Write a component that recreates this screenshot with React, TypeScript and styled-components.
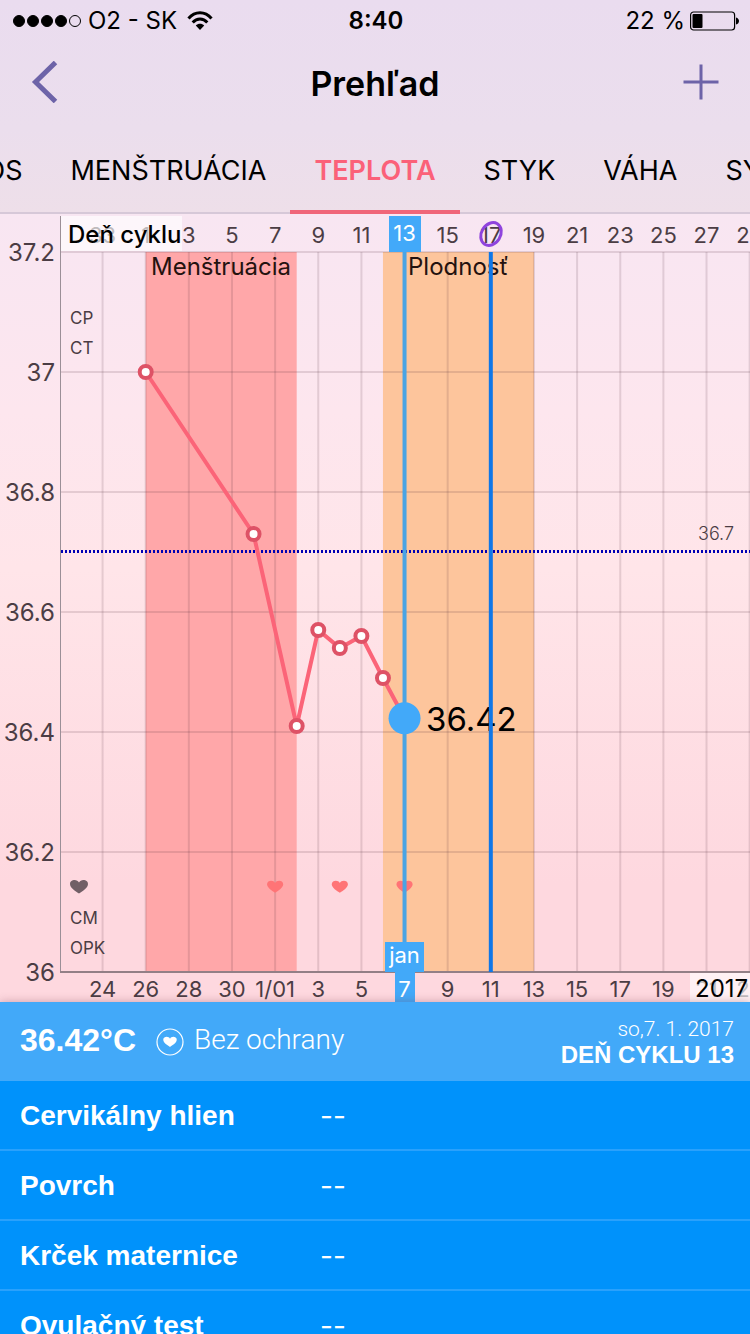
import React from "react";
import styled, { createGlobalStyle } from "styled-components";

const sans = `Inter, Roboto, "Liberation Sans", sans-serif`;
const grotesk = `"Liberation Sans", "Open Sans", sans-serif`;
const light = `Roboto, "Liberation Sans", sans-serif`;
const sky = "#42a9f9";

const GlobalStyle = createGlobalStyle`
  *, *::before, *::after { box-sizing: border-box; }
  body { margin: 0; font-family: ${sans}; color: #000; }
`;

const Screen = styled.div`
  display: flex;
  flex-direction: column;
  height: 100vh;
  overflow: hidden;
  background: #fed8df;
`;

const Top = styled.header`
  flex: none;
  background: linear-gradient(#eadcef, #ebdeed 60%, #eedfe9);
`;

const StatusBar = styled.div`
  display: grid;
  grid-template-columns: 1fr auto 1fr;
  align-items: center;
  height: 40px;
  padding: 2px 11px 0 13px;
  font-size: 24px;
  line-height: 28px;
`;

const StatusSide = styled.div<{ $end?: boolean }>`
  display: flex;
  align-items: center;
  justify-content: ${(p) => (p.$end ? "flex-end" : "flex-start")};
  gap: ${(p) => (p.$end ? 5 : 10)}px;
`;

const Signal = styled.span`
  display: flex;
  gap: 2px;
  margin-right: -3px;
`;

const Dot = styled.i<{ $on: boolean }>`
  width: 12px;
  height: 12px;
  border: 1px solid #000;
  border-radius: 50%;
  background: ${(p) => (p.$on ? "#000" : "transparent")};
`;

const Clock = styled.time`
  font-weight: 600;
`;

const NavBar = styled.div`
  display: grid;
  grid-template-columns: 1fr auto 1fr;
  align-items: center;
  height: 88px;
  padding: 0 31px;
`;

const Title = styled.h1`
  margin: 0;
  font-size: 34px;
  line-height: 40px;
  font-weight: 600;
`;

const IconButton = styled.button<{ $end?: boolean }>`
  justify-self: ${(p) => (p.$end ? "end" : "start")};
  display: flex;
  padding: 0 0 4px;
  border: 0;
  background: none;
`;

const Tabs = styled.nav`
  display: grid;
  grid-template-columns: 1fr auto 1fr;
  height: 86px;
  border-bottom: 2px solid #d6c8d8;
`;

const TabGroup = styled.div<{ $before?: boolean }>`
  display: flex;
  justify-content: ${(p) => (p.$before ? "flex-end" : "flex-start")};
  min-width: 0;
  overflow: hidden;
`;

const Tab = styled.button<{ $active?: boolean }>`
  flex: none;
  height: 86px;
  padding: 4px 24px 0;
  border: 0;
  border-bottom: 4px solid ${(p) => (p.$active ? "#f0667a" : "transparent")};
  background: none;
  font: ${(p) => (p.$active ? 600 : 400)} 27px/32px ${sans};
  color: ${(p) => (p.$active ? "#fb6179" : "#000")};
`;

const ChartPanel = styled.section`
  flex: none;
  background: linear-gradient(#f8e6f2, #fde6ee 25%, #ffe5e9 45%, #fed8df 85%);

  svg {
    display: block;
    width: 100%;
    height: auto;
  }
`;

const Summary = styled.section`
  position: relative;
  flex: none;
  display: flex;
  align-items: center;
  justify-content: space-between;
  height: 79px;
  padding: 0 16px 0 20px;
  background: ${sky};
  box-shadow: 0 -1px 8px rgba(120, 60, 80, 0.3);
  color: #fff;
  font-family: ${grotesk};
`;

const Reading = styled.div`
  display: flex;
  align-items: center;
  padding-bottom: 4px;
`;

const Degrees = styled.strong`
  margin-right: 20px;
  font-size: 32px;
  line-height: 40px;
`;

const Protection = styled.span`
  display: flex;
  align-items: center;
  gap: 10px;
  font: 300 28px/32px ${light};

  svg {
    margin-top: 4px;
  }
`;

const DayInfo = styled.div`
  padding-top: 2px;
  text-align: right;
  font: 300 21px/24px ${light};

  strong {
    display: block;
    font: 700 24px/28px ${grotesk};
  }
`;

const Details = styled.dl`
  position: relative;
  flex: 1;
  min-height: 0;
  margin: 0;
  overflow-y: auto;
  scrollbar-width: none;
  background: #0092fb;
  color: #fff;
`;

const DetailRow = styled.div`
  display: flex;
  align-items: center;
  height: 70px;
  padding: 2px 20px 0;
  border-bottom: 2px solid #2aa1fc;
`;

const DetailName = styled.dt`
  width: 300px;
  font: 700 28px/32px ${grotesk};
`;

const DetailValue = styled.dd`
  margin: 0;
  font-size: 28px;
  line-height: 32px;
`;

const HEART =
  "M0 6.5C-3 4.5-9 1-9-3C-9-6-6.500-7-4.500-7C-2.500-7-.8-6 0-4.500C.8-6 2.500-7 4.500-7C6.500-7 9-6 9-3C9 1 3 4.500 0 6.500Z";

const PLOT = { left: 61, right: 750, top: 38, bottom: 758 };
const FIRST_DAY_X = 145.7;
const DAY_WIDTH = 21.57;
const dayX = (day: number) => FIRST_DAY_X + (day - 1) * DAY_WIDTH;
const tempY = (t: number) => PLOT.bottom - (t - 36) * 600;

const readings = [
  { day: 1, t: 37 },
  { day: 6, t: 36.73 },
  { day: 8, t: 36.41 },
  { day: 9, t: 36.57 },
  { day: 10, t: 36.54 },
  { day: 11, t: 36.56 },
  { day: 12, t: 36.49 },
  { day: 13, t: 36.423 },
];

const columns = [
  { day: -1, cycle: "33", date: "24" },
  { day: 1, cycle: "1", date: "26" },
  { day: 3, cycle: "3", date: "28" },
  { day: 5, cycle: "5", date: "30" },
  { day: 7, cycle: "7", date: "1/01" },
  { day: 9, cycle: "9", date: "3" },
  { day: 11, cycle: "11", date: "5" },
  { day: 13, cycle: "", date: "" },
  { day: 15, cycle: "15", date: "9" },
  { day: 17, cycle: "17", date: "11" },
  { day: 19, cycle: "19", date: "13" },
  { day: 21, cycle: "21", date: "15" },
  { day: 23, cycle: "23", date: "17" },
  { day: 25, cycle: "25", date: "19" },
  { day: 27, cycle: "27", date: "21" },
  { day: 29, cycle: "29", date: "23" },
];

const temperatures = [37.2, 37, 36.8, 36.6, 36.4, 36.2, 36];

const AxisText = styled.text<{ $anchor?: string; $size?: number; $light?: boolean }>`
  font: ${(p) => (p.$light ? 300 : 400)} ${(p) => p.$size ?? 24}px ${sans};
  text-anchor: ${(p) => p.$anchor ?? "middle"};
  fill: #4b3d44;
`;

const BandText = styled.text`
  font: 400 24px ${sans};
  fill: #24120f;
`;

const ValueText = styled.text`
  font: 400 33px ${sans};
  fill: #000;
`;

const MarkerText = styled.text`
  font: 400 22px ${sans};
  text-anchor: middle;
  fill: #fff;
`;

const CaptionText = styled.text<{ $heavy?: boolean }>`
  font: ${(p) => (p.$heavy ? 500 : 400)} 24px ${sans};
  fill: #000;
`;

function TemperatureChart() {
  const selected = dayX(13);
  const ovulation = dayX(17);
  return (
    <ChartPanel>
      <svg viewBox="0 0 750 788" role="img" aria-label="Teplota">
        <rect x={dayX(1)} y={PLOT.top} width={DAY_WIDTH * 7} height={720} fill="#ffa7a9" />
        <rect x={dayX(12)} y={PLOT.top} width={DAY_WIDTH * 7} height={720} fill="#fdc59c" />

        <g stroke="#50303c" strokeOpacity=".15" strokeWidth="2">
          {columns.map((c) => (
            <line key={c.day} x1={dayX(c.day)} x2={dayX(c.day)} y1={PLOT.top} y2={PLOT.bottom} />
          ))}
          {temperatures.slice(0, -1).map((t) => (
            <line key={t} x1={PLOT.left} x2={PLOT.right} y1={tempY(t)} y2={tempY(t)} />
          ))}
        </g>
        <line x1="60.5" x2="60.5" y1="2" y2="758" stroke="#9b8f97" />
        <line x1="60" x2="750" y1="758" y2="758" stroke="#937f86" strokeWidth="2" />

        {temperatures.map((t) => (
          <AxisText key={t} x="55" y={tempY(t) + 9} $anchor="end">
            {t}
          </AxisText>
        ))}
        {columns.map((c) => (
          <React.Fragment key={c.day}>
            <AxisText x={dayX(c.day)} y="29" $size={22}>{c.cycle}</AxisText>
            <AxisText x={dayX(c.day)} y="783" $size={22}>{c.date}</AxisText>
          </React.Fragment>
        ))}

        <AxisText x="70" y="110" $anchor="start" $size={17}>CP</AxisText>
        <AxisText x="70" y="140" $anchor="start" $size={17}>CT</AxisText>
        <AxisText x="70" y="710" $anchor="start" $size={17}>CM</AxisText>
        <AxisText x="70" y="740" $anchor="start" $size={17}>OPK</AxisText>
        <path d={HEART} transform="translate(79 673)" fill="#715f66" />
        {[7, 10, 13].map((d) => (
          <path key={d} d={HEART} transform={`translate(${dayX(d)} 673) scale(.9)`} fill="#ff7476" />
        ))}

        <line x1="61" x2="750" y1="337.5" y2="337.5" stroke="#0000b4" strokeWidth="3" strokeDasharray="2 2" />
        <AxisText x="734" y="326" $anchor="end" $size={18} $light>36.7</AxisText>

        <BandText x="151" y="61">Menštruácia</BandText>
        <BandText x="408" y="61">Plodnosť</BandText>

        <polyline
          points={readings.map((r) => `${dayX(r.day)},${tempY(r.t)}`).join(" ")}
          fill="none"
          stroke="#fb6478"
          strokeWidth="4"
        />
        {readings.slice(0, -1).map((r) => (
          <circle key={r.day} cx={dayX(r.day)} cy={tempY(r.t)} r="6" fill="#fff" stroke="#de5266" strokeWidth="4" />
        ))}

        <ValueText x="426" y="517">36.42</ValueText>
        <line x1={ovulation} x2={ovulation} y1={PLOT.top} y2={PLOT.bottom} stroke="#0f77e8" strokeWidth="4" />
        <line x1={selected} x2={selected} y1={PLOT.top} y2="728" stroke="#4aa4e4" strokeWidth="4" />
        <circle cx={selected} cy={tempY(36.423)} r="16" fill={sky} />

        <g fill={sky}>
          <rect x="389" y="2" width="32" height="36" />
          <rect x="385" y="728" width="39" height="30" />
          <rect x="395" y="758" width="20" height="30" />
        </g>
        <MarkerText x={selected} y="27">13</MarkerText>
        <MarkerText x={selected} y="749">jan</MarkerText>
        <MarkerText x={selected} y="783">7</MarkerText>

        <ellipse
          cx="491"
          cy="20"
          rx="9.500"
          ry="12"
          transform="rotate(32 491 20)"
          fill="none"
          stroke="#8f44dd"
          strokeWidth="3"
        />

        <rect x="61" y="2" width="121" height="35" fill="#fff" fillOpacity=".65" />
        <CaptionText x="68" y="29" $heavy>Deň cyklu</CaptionText>
        <rect x="690" y="759" width="60" height="29" fill="#fff" fillOpacity=".65" />
        <CaptionText x="695" y="783">2017</CaptionText>
      </svg>
    </ChartPanel>
  );
}

const details = ["Cervikálny hlien", "Povrch", "Krček maternice", "Ovulačný test"];

export default function App() {
  return (
    <Screen>
      <GlobalStyle />
      <Top>
        <StatusBar>
          <StatusSide>
            <Signal>
              {[true, true, true, true, false].map((on, i) => (
                <Dot key={i} $on={on} />
              ))}
            </Signal>
            <span>O2 - SK</span>
            <svg width="26" height="20" viewBox="0 0 26 20" fill="none" stroke="#000" strokeWidth="3">
              <path d="M1.500 7.500C8-.3 18-.3 24.500 7.500" />
              <path d="M5.700 11.500C10 6.800 16 6.800 20.300 11.500" />
              <path d="M13 19L8.800 14.500C11 12 15 12 17.200 14.500Z" fill="#000" stroke="none" />
            </svg>
          </StatusSide>
          <Clock>8:40</Clock>
          <StatusSide $end>
            <span>22 %</span>
            <svg width="49" height="20" viewBox="0 0 49 20">
              <rect x=".6" y="1" width="44" height="18" rx="3" fill="none" stroke="#000" strokeWidth="1.200" />
              <rect x="2.500" y="3" width="10" height="14" rx="1" />
              <path d="M46 6.500C50 7.500 50 12.500 46 13.500Z" />
            </svg>
          </StatusSide>
        </StatusBar>
        <NavBar>
          <IconButton aria-label="Späť">
            <svg width="28" height="42" viewBox="0 0 28 42" fill="none" stroke="#6d63a8" strokeWidth="5">
              <path d="M24.500 1.500L4.500 21L24.500 40.500" />
            </svg>
          </IconButton>
          <Title>Prehľad</Title>
          <IconButton $end aria-label="Pridať">
            <svg width="36" height="36" viewBox="0 0 36 36" stroke="#6d63a8" strokeWidth="3">
              <path d="M18 .5V35.500M.5 18H35.500" />
            </svg>
          </IconButton>
        </NavBar>
        <Tabs>
          <TabGroup $before>
            <Tab>OS</Tab>
            <Tab>MENŠTRUÁCIA</Tab>
          </TabGroup>
          <Tab $active>TEPLOTA</Tab>
          <TabGroup>
            <Tab>STYK</Tab>
            <Tab>VÁHA</Tab>
            <Tab>SY</Tab>
          </TabGroup>
        </Tabs>
      </Top>
      <TemperatureChart />
      <Summary>
        <Reading>
          <Degrees>36.42°C</Degrees>
          <Protection>
            <svg width="28" height="28" viewBox="0 0 28 28">
              <circle cx="14" cy="14" r="13" fill="none" stroke="#fff" strokeWidth="1.200" />
              <path d={HEART} transform="translate(14 14) scale(.75)" fill="#fff" />
            </svg>
            Bez ochrany
          </Protection>
        </Reading>
        <DayInfo>
          so,7. 1. 2017
          <strong>DEŇ CYKLU 13</strong>
        </DayInfo>
      </Summary>
      <Details>
        {details.map((name) => (
          <DetailRow key={name}>
            <DetailName>{name}</DetailName>
            <DetailValue>--</DetailValue>
          </DetailRow>
        ))}
      </Details>
    </Screen>
  );
}
